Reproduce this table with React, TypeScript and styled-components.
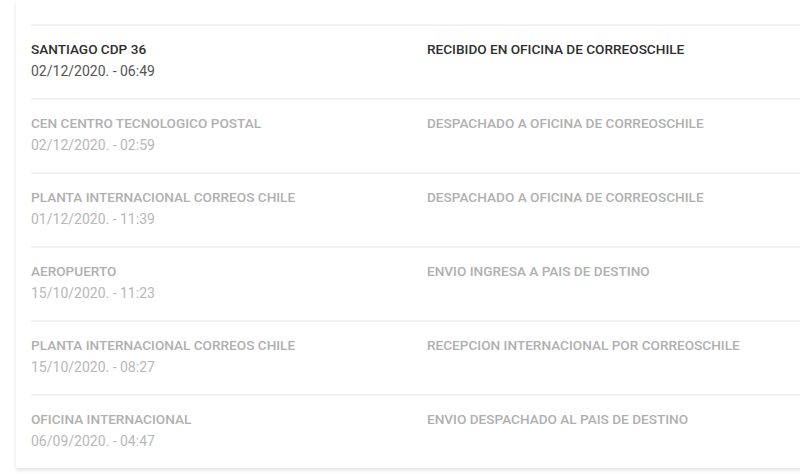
import React from 'react';
import styled, { createGlobalStyle } from 'styled-components';

const GlobalStyle = createGlobalStyle`
  html, body {
    margin: 0;
    padding: 0;
    background: #fff;
    font-family: Roboto, 'Liberation Sans', sans-serif;
    overflow: hidden;
  }
`;

const Page = styled.div`
  width: 800px;
  height: 474px;
  overflow: hidden;
`;

const Card = styled.div`
  margin-left: 16px;
  width: 820px;
  padding: 24px 0 0 15px;
  background: #fff;
  box-shadow: 0 2px 4px rgba(0, 0, 0, 0.12);
`;

const Row = styled.div`
  display: grid;
  grid-template-columns: 396px 1fr;
  height: 72px;
  border-top: 2px solid #f2f2f2;
  box-sizing: content-box;
`;

const Cell = styled.div`
  padding-top: 15px;
  display: flex;
  flex-direction: column;
  gap: 6px;
`;

const Title = styled.div<{ $active?: boolean }>`
  font-size: 13.6px;
  font-weight: 500;
  line-height: 16px;
  color: ${(p) => (p.$active ? '#2e2e2e' : '#b0b0b0')};
`;

const Stamp = styled.div<{ $active?: boolean }>`
  font-size: 14px;
  line-height: 16px;
  color: ${(p) => (p.$active ? '#555' : '#b8b8b8')};
`;

const events = [
  { place: 'SANTIAGO CDP 36', date: '02/12/2020. - 06:49', status: 'RECIBIDO EN OFICINA DE CORREOSCHILE' },
  { place: 'CEN CENTRO TECNOLOGICO POSTAL', date: '02/12/2020. - 02:59', status: 'DESPACHADO A OFICINA DE CORREOSCHILE' },
  { place: 'PLANTA INTERNACIONAL CORREOS CHILE', date: '01/12/2020. - 11:39', status: 'DESPACHADO A OFICINA DE CORREOSCHILE' },
  { place: 'AEROPUERTO', date: '15/10/2020. - 11:23', status: 'ENVIO INGRESA A PAIS DE DESTINO' },
  { place: 'PLANTA INTERNACIONAL CORREOS CHILE', date: '15/10/2020. - 08:27', status: 'RECEPCION INTERNACIONAL POR CORREOSCHILE' },
  { place: 'OFICINA INTERNACIONAL', date: '06/09/2020. - 04:47', status: 'ENVIO DESPACHADO AL PAIS DE DESTINO' },
];

export default function App() {
  return (
    <Page>
      <GlobalStyle />
      <Card>
        {events.map((e, i) => (
          <Row key={i}>
            <Cell>
              <Title $active={i === 0}>{e.place}</Title>
              <Stamp $active={i === 0}>{e.date}</Stamp>
            </Cell>
            <Cell>
              <Title $active={i === 0}>{e.status}</Title>
            </Cell>
          </Row>
        ))}
      </Card>
    </Page>
  );
}
